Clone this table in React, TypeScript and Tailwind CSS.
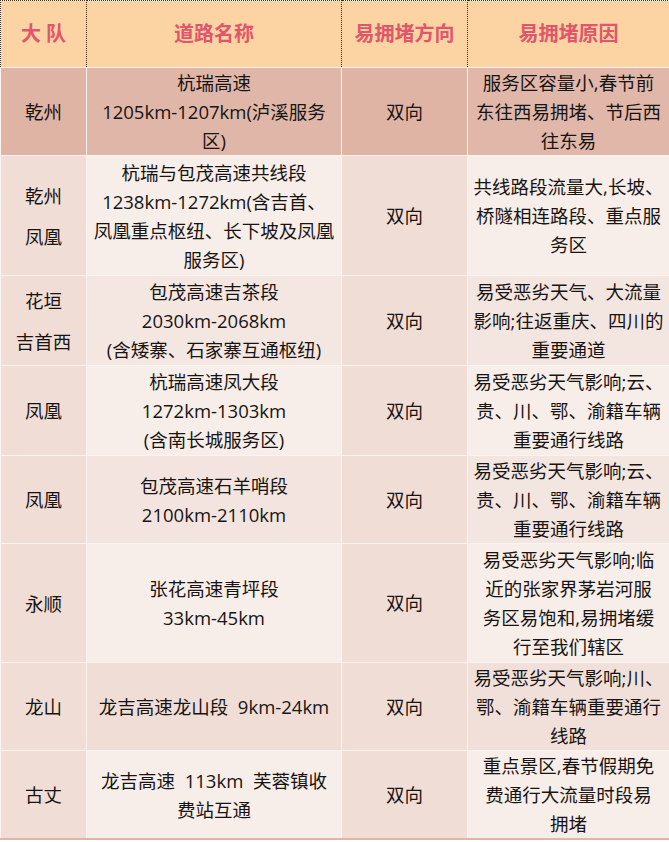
import React from 'react';

type Row = {
  team: string[];
  road: string[];
  dir: string;
  reason: string[];
  h: string;
  c1: string;
  c2: string;
  c3: string;
  c4: string;
};

const light1 = 'bg-[#f0ddd6]';
const light2 = 'bg-[#f7ede9]';

const rows: Row[] = [
  {
    team: ['乾州'],
    road: ['杭瑞高速', '1205km-1207km(泸溪服务', '区)'],
    dir: '双向',
    reason: ['服务区容量小,春节前', '东往西易拥堵、节后西', '往东易'],
    h: 'h-[88px]',
    c1: 'bg-[#dfb4a5]',
    c2: 'bg-[#e0b6a8]',
    c3: 'bg-[#dfb4a5]',
    c4: 'bg-[#e0b7a9]',
  },
  {
    team: ['乾州', '凤凰'],
    road: ['杭瑞与包茂高速共线段', '1238km-1272km(含吉首、', '凤凰重点枢纽、长下坡及凤凰', '服务区)'],
    dir: '双向',
    reason: ['共线路段流量大,长坡、', '桥隧相连路段、重点服', '务区'],
    h: 'h-[120px]',
    c1: light1,
    c2: light2,
    c3: light1,
    c4: light2,
  },
  {
    team: ['花垣', '吉首西'],
    road: ['包茂高速吉茶段', '2030km-2068km', '(含矮寨、石家寨互通枢纽)'],
    dir: '双向',
    reason: ['易受恶劣天气、大流量', '影响;往返重庆、四川的', '重要通道'],
    h: 'h-[90px]',
    c1: light1,
    c2: 'bg-[#f4e7e2]',
    c3: light1,
    c4: 'bg-[#f3e5e0]',
  },
  {
    team: ['凤凰'],
    road: ['杭瑞高速凤大段', '1272km-1303km', '(含南长城服务区)'],
    dir: '双向',
    reason: ['易受恶劣天气影响;云、', '贵、川、鄂、渝籍车辆', '重要通行线路'],
    h: 'h-[90px]',
    c1: light1,
    c2: light2,
    c3: light1,
    c4: light2,
  },
  {
    team: ['凤凰'],
    road: ['包茂高速石羊哨段', '2100km-2110km'],
    dir: '双向',
    reason: ['易受恶劣天气影响;云、', '贵、川、鄂、渝籍车辆', '重要通行线路'],
    h: 'h-[88px]',
    c1: light1,
    c2: 'bg-[#f3e4df]',
    c3: light1,
    c4: 'bg-[#f3e5e0]',
  },
  {
    team: ['永顺'],
    road: ['张花高速青坪段', '33km-45km'],
    dir: '双向',
    reason: ['易受恶劣天气影响;临', '近的张家界茅岩河服', '务区易饱和,易拥堵缓', '行至我们辖区'],
    h: 'h-[119px]',
    c1: light1,
    c2: light2,
    c3: light1,
    c4: light2,
  },
  {
    team: ['龙山'],
    road: ['龙吉高速龙山段\u00a0\u00a09km-24km'],
    dir: '双向',
    reason: ['易受恶劣天气影响;川、', '鄂、渝籍车辆重要通行', '线路'],
    h: 'h-[88px]',
    c1: light1,
    c2: 'bg-[#f0ddd6]',
    c3: light1,
    c4: 'bg-[#f1e0da]',
  },
  {
    team: ['古丈'],
    road: ['龙吉高速\u00a0\u00a0113km\u00a0\u00a0芙蓉镇收', '费站互通'],
    dir: '双向',
    reason: ['重点景区,春节假期免', '费通行大流量时段易', '拥堵'],
    h: 'h-[88px]',
    c1: light1,
    c2: light2,
    c3: light1,
    c4: light2,
  },
];

const Lines = ({ lines, tall }: { lines: string[]; tall?: boolean }) => (
  <div className={tall ? 'leading-[41px]' : 'leading-[29px]'}>
    {lines.map((l, i) => (
      <div key={i} className="whitespace-nowrap">
        {l}
      </div>
    ))}
  </div>
);

export default function App() {
  const cell = 'text-center align-middle border border-[#fbf3f0] p-0';
  const head =
    'text-center align-middle font-bold text-[20px] text-[#e0566b] border-x border-dotted border-x-[#3a2a20] border-t border-t-[#3a2a20] border-b border-b-[#e8b98e] p-0';
  return (
    <div
      className="w-[669px] h-[842px] bg-white overflow-hidden"
      style={{ fontFamily: '"Open Sans", "Noto Sans CJK SC", sans-serif' }}
    >
      <table className="w-[669px] table-fixed border-collapse text-[18.5px] text-[#181412]">
        <colgroup>
          <col className="w-[86px]" />
          <col className="w-[255px]" />
          <col className="w-[126px]" />
          <col className="w-[202px]" />
        </colgroup>
        <thead>
          <tr className="h-[67px] bg-[#fcd3a3]">
            <th className={head}>大 队</th>
            <th className={head}>道路名称</th>
            <th className={head}>易拥堵方向</th>
            <th className={head}>易拥堵原因</th>
          </tr>
        </thead>
        <tbody className="border-b-2 border-b-[#e2b3a8]">
          {rows.map((r, i) => (
            <tr key={i} className={r.h}>
              <td className={`${cell} ${r.c1}`}>
                <Lines lines={r.team} tall />
              </td>
              <td className={`${cell} ${r.c2}`}>
                <Lines lines={r.road} />
              </td>
              <td className={`${cell} ${r.c3}`}>{r.dir}</td>
              <td className={`${cell} ${r.c4}`}>
                <Lines lines={r.reason} />
              </td>
            </tr>
          ))}
        </tbody>
      </table>
    </div>
  );
}
